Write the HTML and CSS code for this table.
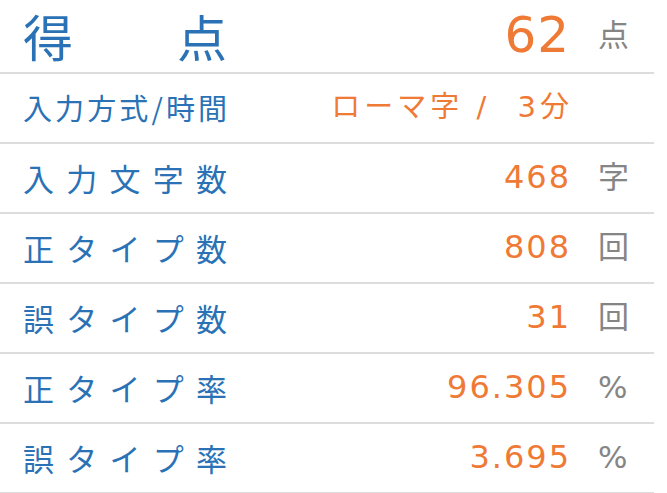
FILE: index.html
```html
<!DOCTYPE html>
<html lang="ja">
<head>
<meta charset="utf-8">
<link rel="stylesheet" href="styles.css">
</head>
<body>
<div class="score">
  <div class="row head">
    <div class="label">得点</div>
    <div class="value">62</div>
    <div class="unit">点</div>
  </div>
  <div class="row">
    <div class="label small">入力方式/時間</div>
    <div class="value mode">ローマ字 / <span class="time">3分</span></div>
    <div class="unit"></div>
  </div>
  <div class="row">
    <div class="label">入力文字数</div>
    <div class="value">468</div>
    <div class="unit">字</div>
  </div>
  <div class="row">
    <div class="label">正タイプ数</div>
    <div class="value">808</div>
    <div class="unit">回</div>
  </div>
  <div class="row">
    <div class="label">誤タイプ数</div>
    <div class="value">31</div>
    <div class="unit">回</div>
  </div>
  <div class="row">
    <div class="label">正タイプ率</div>
    <div class="value">96.305</div>
    <div class="unit">%</div>
  </div>
  <div class="row">
    <div class="label">誤タイプ率</div>
    <div class="value">3.695</div>
    <div class="unit">%</div>
  </div>
</div>
</body>
</html>
```

FILE: styles.css
```css
html, body {
  margin: 0;
  padding: 0;
  background: #ffffff;
}

body {
  font-family: "DejaVu Sans", "Noto Sans CJK JP", sans-serif;
}

.score {
  width: 654px;
}

.row {
  display: flex;
  align-items: center;
  height: 68px;
  border-bottom: 2px solid #dcdcdc;
  line-height: 1;
}

.row.head {
  height: 72px;
}

.label {
  box-sizing: content-box;
  width: 204px;
  padding-left: 23px;
  color: #2a72b5;
  font-family: "Noto Sans CJK JP", sans-serif;
  font-size: 31px;
  text-align: justify;
  text-align-last: justify;
  text-justify: inter-character;
  margin-top: -2px;
}

.label.small {
  font-size: 29px;
}

.head .label {
  font-size: 50px;
}

.value {
  flex: 1;
  text-align: right;
  color: #ef7a35;
  font-size: 32px;
  letter-spacing: 2px;
  margin-right: -2px;
  margin-top: -2px;
}

.head .value {
  font-size: 50px;
  letter-spacing: 1px;
  margin-right: -1px;
}

.value.mode {
  font-size: 29px;
  letter-spacing: 4px;
  margin-right: -4px;
}

.time {
  margin-left: 14px;
}

.unit {
  width: 32px;
  margin-left: 29px;
  margin-right: 24px;
  color: #858585;
  font-size: 31px;
  margin-top: -2px;
}
```
